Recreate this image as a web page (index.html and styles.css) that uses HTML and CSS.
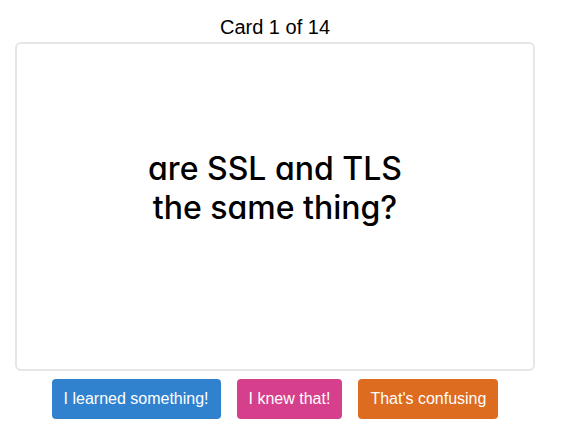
FILE: index.html
```html
<!DOCTYPE html>
<html lang="en">
<head>
<meta charset="utf-8">
<meta name="viewport" content="width=device-width, initial-scale=1">
<title>Flashcards</title>
<link rel="stylesheet" href="styles.css">
</head>
<body>
<main class="deck">
  <h1 class="progress">Card 1 of 14</h1>
  <section class="card">
    <p class="question">are SSL and TLS<br>the same thing?</p>
  </section>
  <div class="answers">
    <button type="button" class="button learned">I learned something!</button>
    <button type="button" class="button knew">I knew that!</button>
    <button type="button" class="button confusing">That's confusing</button>
  </div>
</main>
</body>
</html>
```
FILE: styles.css
```css
* {
  box-sizing: border-box;
}

body {
  margin: 0;
  background: #fff;
  color: #000;
  font-family: "Liberation Sans", Arial, sans-serif;
}

.deck {
  display: flex;
  flex-direction: column;
  min-height: 100vh;
  padding: 12px 27px 17px 15px;
}

.progress {
  margin: 0;
  font-size: 20px;
  font-weight: 400;
  line-height: 30px;
  text-align: center;
}

.card {
  display: flex;
  flex: 1;
  align-items: center;
  justify-content: center;
  padding-bottom: 38px;
  border: 2px solid #e4e7ea;
  border-radius: 6px;
}

.question {
  margin: 0;
  font-family: Inter, "Open Sans", sans-serif;
  font-feature-settings: "cv11" 1, "ss03" 1;
  font-size: 32px;
  font-weight: 500;
  line-height: 39px;
  text-align: center;
}

.answers {
  display: flex;
  flex-wrap: wrap;
  gap: 16px;
  justify-content: center;
  margin-top: 8px;
}

.button {
  padding: 8px 12px;
  border: 0;
  border-radius: 4px;
  color: #fff;
  font-family: inherit;
  font-size: 16px;
  line-height: 24px;
  cursor: pointer;
}

.learned {
  background: #3182ce;
}

.knew {
  background: #d53f8c;
}

.confusing {
  background: #dd6b20;
}
```
